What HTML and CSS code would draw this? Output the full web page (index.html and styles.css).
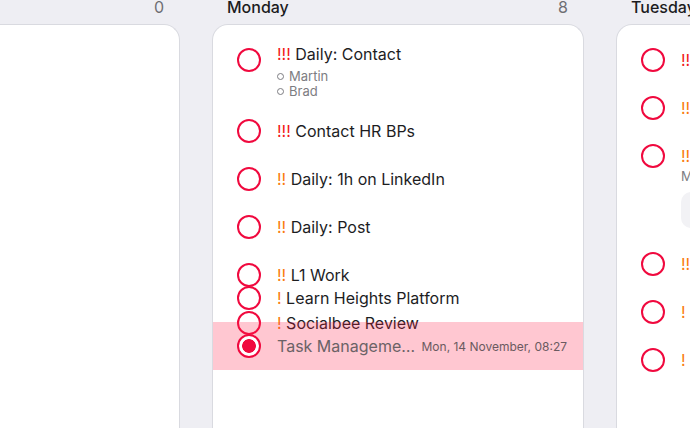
FILE: index.html
```html
<!DOCTYPE html>
<html lang="en">
<head>
<meta charset="utf-8">
<title>Board</title>
<link rel="stylesheet" href="styles.css">
</head>
<body>
<div class="board">
  <section class="col">
    <header class="col-head"><span class="day">Sunday</span><span class="count">0</span></header>
    <div class="card"></div>
  </section>

  <section class="col">
    <header class="col-head"><span class="day">Monday</span><span class="count">8</span></header>
    <div class="card">
      <div class="task has-notes">
        <span class="check"></span>
        <div class="body">
          <div class="title"><span class="p-high">!!!</span> Daily: Contact</div>
          <ul class="notes"><li>Martin</li><li>Brad</li></ul>
        </div>
      </div>
      <div class="task">
        <span class="check"></span>
        <div class="body"><div class="title"><span class="p-high">!!!</span> Contact HR BPs</div></div>
      </div>
      <div class="task">
        <span class="check"></span>
        <div class="body"><div class="title"><span class="p-med">!!</span> Daily: 1h on LinkedIn</div></div>
      </div>
      <div class="task">
        <span class="check"></span>
        <div class="body"><div class="title"><span class="p-med">!!</span> Daily: Post</div></div>
      </div>
      <div class="task squeeze-a">
        <span class="check"></span>
        <div class="body"><div class="title"><span class="p-med">!!</span> L1 Work</div></div>
      </div>
      <div class="task squeeze-b">
        <span class="check"></span>
        <div class="body"><div class="title"><span class="p-low">!</span> Learn Heights Platform</div></div>
      </div>
      <div class="task squeeze-c">
        <span class="check"></span>
        <div class="body"><div class="title"><span class="p-low">!</span> Socialbee Review</div></div>
      </div>
      <div class="task selected">
        <span class="check done"></span>
        <div class="body row">
          <div class="title muted">Task Manageme…</div>
          <div class="date">Mon, 14 November, 08:27</div>
        </div>
      </div>
    </div>
  </section>

  <section class="col">
    <header class="col-head"><span class="day">Tuesday</span><span class="count">6</span></header>
    <div class="card">
      <div class="task">
        <span class="check"></span>
        <div class="body"><div class="title"><span class="p-high">!!!</span> Daily: Contact</div></div>
      </div>
      <div class="task">
        <span class="check"></span>
        <div class="body"><div class="title"><span class="p-med">!!</span> Daily: 1h on LinkedIn</div></div>
      </div>
      <div class="task">
        <span class="check"></span>
        <div class="body">
          <div class="title"><span class="p-med">!!</span> Daily: Post</div>
          <div class="sub">Meeting notes</div>
          <div class="preview">Attachment</div>
        </div>
      </div>
      <div class="task">
        <span class="check"></span>
        <div class="body"><div class="title"><span class="p-med">!!</span> L1 Work</div></div>
      </div>
      <div class="task">
        <span class="check"></span>
        <div class="body"><div class="title"><span class="p-low">!</span> Learn Heights Platform</div></div>
      </div>
      <div class="task">
        <span class="check"></span>
        <div class="body"><div class="title"><span class="p-low">!</span> Socialbee Review</div></div>
      </div>
    </div>
  </section>
</div>
</body>
</html>
```

FILE: styles.css
```css
* { box-sizing: border-box; }

html, body {
  margin: 0;
  padding: 0;
  height: 100%;
  overflow: hidden;
  background: #eeeef3;
  font-family: "Inter", "Noto Sans", sans-serif;
  color: #1d1d1f;
}

.board {
  display: flex;
  gap: 32px;
  margin-left: -192px;
  height: 100vh;
}

.col {
  flex: 0 0 372px;
  min-width: 0;
  width: 372px;
  display: flex;
  flex-direction: column;
}

.col-head {
  height: 24px;
  display: flex;
  justify-content: space-between;
  padding: 0 16px 0 15px;
  font-size: 16px;
  line-height: 14px;
}

.day {
  font-weight: 500;
  color: #1c1c1e;
}

.count {
  color: #6e6e73;
}

.card {
  flex: 1;
  min-width: 0;
  overflow: hidden;
  background: #ffffff;
  border: 1px solid #d9dae0;
  border-bottom: none;
  border-radius: 16px 16px 0 0;
  padding-top: 11px;
}

.task {
  display: flex;
  align-items: flex-start;
  gap: 16px;
  padding: 12px 24px;
  min-height: 48px;
}

.check {
  flex: 0 0 24px;
  width: 24px;
  height: 24px;
  border: 2px solid #f0093e;
  border-radius: 50%;
  background: #fff;
}

.check.done {
  background: radial-gradient(circle, #f0093e 0 6.5px, #ffffff 7.2px);
}

.body {
  flex: 1;
  min-width: 0;
}

.title {
  font-size: 16px;
  line-height: 24px;
  white-space: nowrap;
}

.p-high { color: #f21818; }
.p-med  { color: #fa7a0c; }
.p-low  { color: #fa7a0c; }

.has-notes {
  padding-bottom: 8px;
}

.has-notes .body {
  margin-top: -6px;
}

.notes {
  list-style: none;
  margin: 3px 0 0;
  padding: 0;
  font-size: 13px;
  line-height: 15px;
  color: #7d7d82;
}

.notes li {
  display: flex;
  align-items: center;
  gap: 5px;
}

.notes li::before {
  content: "";
  width: 5px;
  height: 5px;
  border: 1px solid #7d7d82;
  border-radius: 50%;
}

.squeeze-a {
  padding-bottom: 0;
  min-height: 0;
}

.squeeze-b {
  padding: 0 24px;
  min-height: 0;
  margin-top: -1px;
}

.squeeze-c {
  padding: 0 24px;
  min-height: 0;
  margin-top: 1px;
}

.selected {
  position: relative;
  margin-top: -13px;
  background: rgba(254, 30, 70, 0.25);
}

.row {
  display: flex;
  align-items: center;
  justify-content: space-between;
  gap: 4px;
}

.title.muted {
  color: #6b6266;
  overflow: hidden;
  text-overflow: ellipsis;
}

.date {
  font-size: 12px;
  color: #6b5a60;
  white-space: nowrap;
  margin-right: -8px;
}

.sub {
  font-size: 13px;
  line-height: 15px;
  color: #7d7d82;
  margin-top: 1px;
}

.preview {
  margin-top: 8px;
  height: 36px;
  border-radius: 10px;
  background: #f2f2f5;
  font-size: 12px;
  line-height: 36px;
  padding: 0 10px;
  color: #86868b;
}
```
